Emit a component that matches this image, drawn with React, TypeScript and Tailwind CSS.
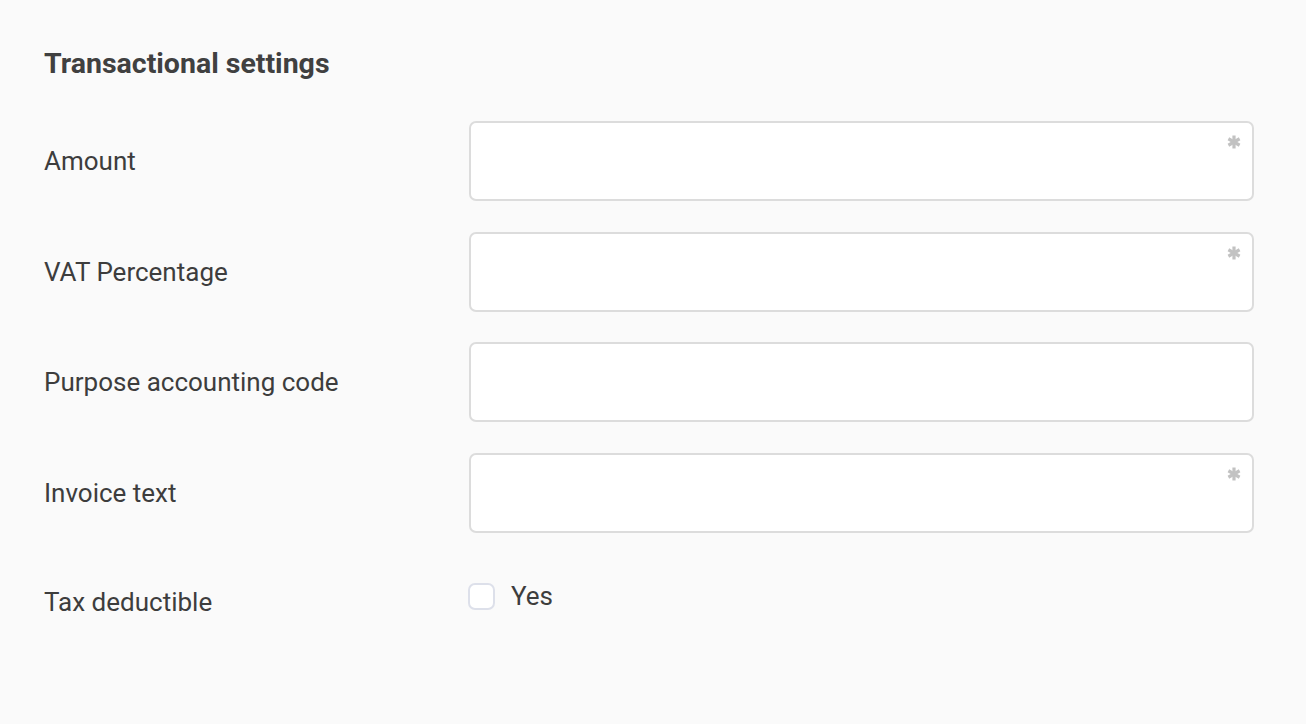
import React from 'react'

const fields = [
    { label: 'Amount', required: true },
    { label: 'VAT Percentage', required: true },
    { label: 'Purpose accounting code', required: false },
    { label: 'Invoice text', required: true },
]

const Asterisk = () => (
    <svg width="14" height="14" viewBox="0 0 14 14" className="absolute right-[13px] top-[14px]">
        <g stroke="#c2c2c2" strokeWidth="3.2" strokeLinecap="butt">
            <line x1="7" y1="0.5" x2="7" y2="13.5" />
            <line x1="1.4" y1="3.75" x2="12.6" y2="10.25" />
            <line x1="1.4" y1="10.25" x2="12.6" y2="3.75" />
        </g>
    </svg>
)

const App = () => {
    return (
        <div className="min-h-screen w-full bg-[#fafafa] text-[#3d3d3d] font-['Roboto',sans-serif] pl-[44px] pr-[52px] pt-[46px]">
            <h1 className="text-[28.5px] font-bold leading-[36px] text-[#404040]">Transactional settings</h1>
            <div className="flex flex-col gap-[30.67px] mt-[39px]">
                {fields.map((f) => (
                    <div key={f.label} className="flex items-center">
                        <label className="w-[425px] text-[26px] leading-none">{f.label}</label>
                        <div className="relative flex-1">
                            <input
                                type="text"
                                className="w-full h-[80px] bg-white border-2 border-[#dcdcdc] rounded-[7px] px-4 text-[20px] outline-none"
                            />
                            {f.required && <Asterisk />}
                        </div>
                    </div>
                ))}
                <div className="flex items-start mt-[19px]">
                    <label className="w-[425px] text-[26px] leading-none pt-[6px]">Tax deductible</label>
                    <label className="flex items-center gap-[16px] -ml-[1px]">
                        <span className="w-[27px] h-[27px] rounded-[7px] border-2 border-[#dde0ea] bg-white" />
                        <span className="text-[26px] leading-none">Yes</span>
                    </label>
                </div>
            </div>
        </div>
    )
}

export default App
